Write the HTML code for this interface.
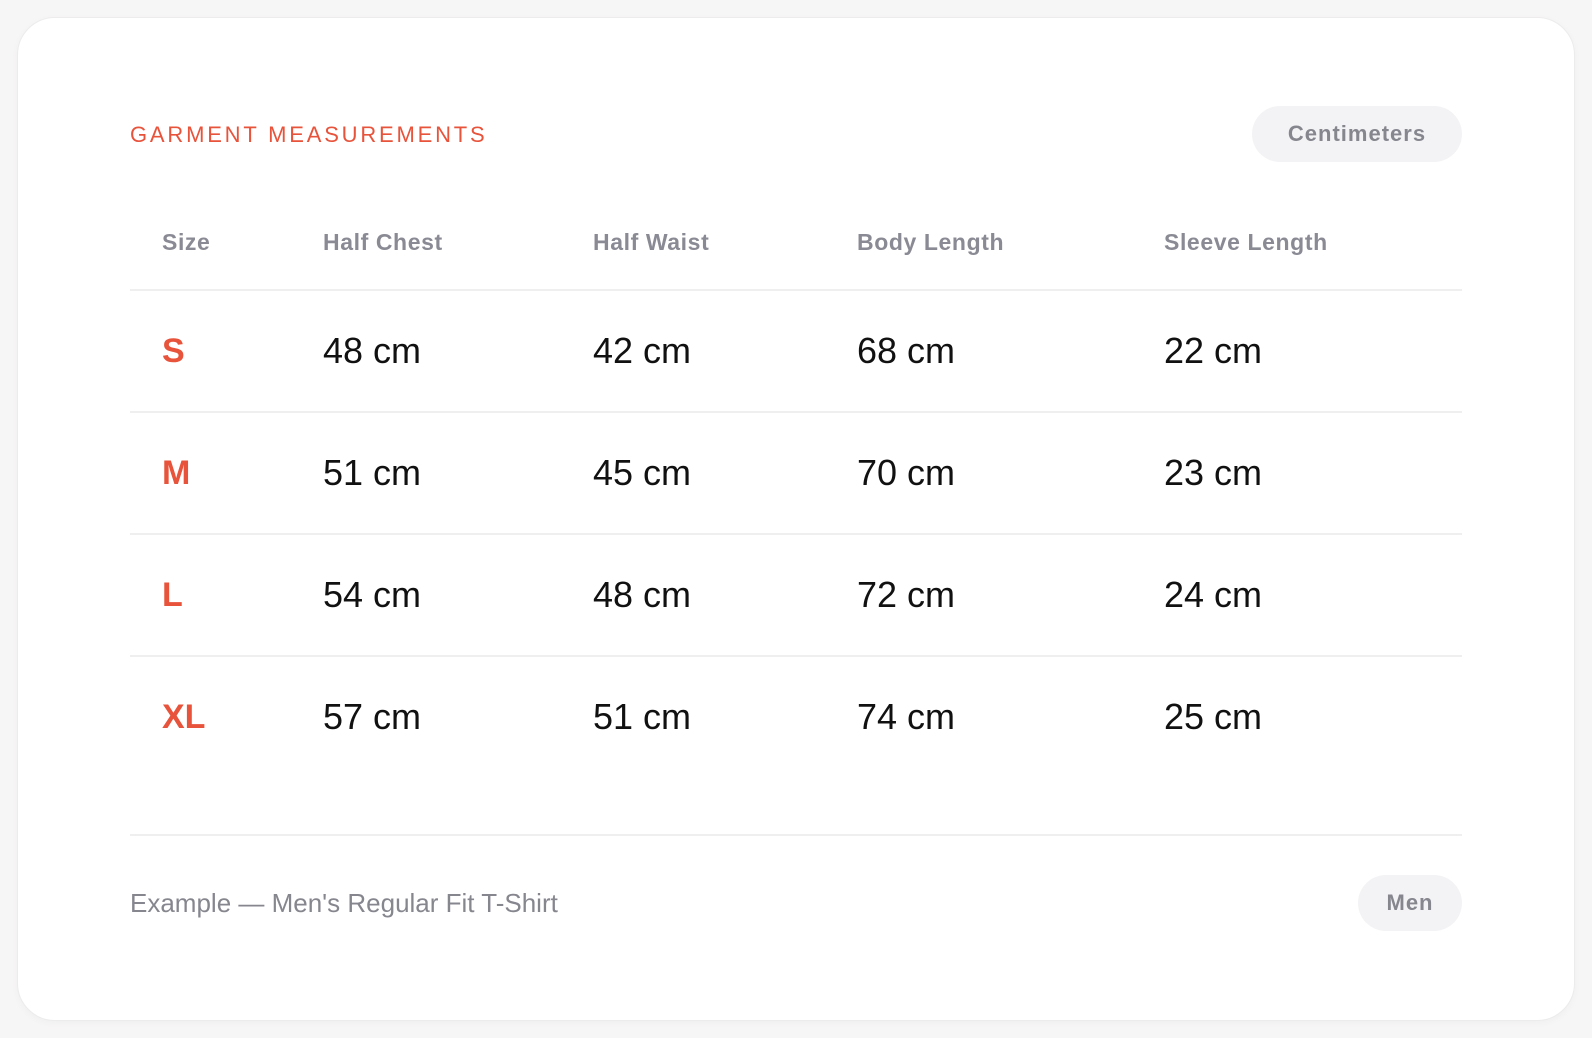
<!DOCTYPE html>
<html><head><style>
*{margin:0;padding:0;box-sizing:border-box}
body{width:1592px;height:1038px;background:#f7f6f6;font-family:"Liberation Sans",sans-serif;position:relative;overflow:hidden}
.card{position:absolute;left:17px;top:17px;width:1558px;height:1004px;background:#fff;border-radius:38px;border:1px solid #ececec;box-shadow:0 2px 8px rgba(0,0,0,0.03)}
.t{position:absolute;white-space:nowrap}
.title{left:130px;top:122px;font-size:22px;letter-spacing:2.8px;color:#e8533b}
.pill{position:absolute;background:#f3f3f5;border-radius:28px;color:#86868f;font-size:22px;font-weight:bold;display:flex;align-items:center;justify-content:center;letter-spacing:1px}
.h{font-size:23px;color:#8a8a94;top:229px;font-weight:bold;letter-spacing:0.6px}
.line{position:absolute;left:130px;width:1332px;height:2px;background:#efefef}
.v{font-size:36px;color:#111;}
.s{font-size:34px;color:#e8533b;font-weight:bold}
</style></head><body>
<div class="card"></div>
<div class="t title">GARMENT MEASUREMENTS</div>
<div class="pill" style="left:1252px;top:106px;width:210px;height:56px">Centimeters</div>
<div class="t h" style="left:162px">Size</div>
<div class="t h" style="left:323px">Half Chest</div>
<div class="t h" style="left:593px">Half Waist</div>
<div class="t h" style="left:857px">Body Length</div>
<div class="t h" style="left:1164px">Sleeve Length</div>
<div class="line" style="top:289px"></div>
<div class="line" style="top:411px"></div>
<div class="line" style="top:533px"></div>
<div class="line" style="top:655px"></div>
<div class="line" style="top:834px"></div>

<div class="t s" style="left:162px;top:332px">S</div>
<div class="t v" style="left:323px;top:330px">48 cm</div>
<div class="t v" style="left:593px;top:330px">42 cm</div>
<div class="t v" style="left:857px;top:330px">68 cm</div>
<div class="t v" style="left:1164px;top:330px">22 cm</div>

<div class="t s" style="left:162px;top:454px">M</div>
<div class="t v" style="left:323px;top:452px">51 cm</div>
<div class="t v" style="left:593px;top:452px">45 cm</div>
<div class="t v" style="left:857px;top:452px">70 cm</div>
<div class="t v" style="left:1164px;top:452px">23 cm</div>

<div class="t s" style="left:162px;top:576px">L</div>
<div class="t v" style="left:323px;top:574px">54 cm</div>
<div class="t v" style="left:593px;top:574px">48 cm</div>
<div class="t v" style="left:857px;top:574px">72 cm</div>
<div class="t v" style="left:1164px;top:574px">24 cm</div>

<div class="t s" style="left:162px;top:698px">XL</div>
<div class="t v" style="left:323px;top:696px">57 cm</div>
<div class="t v" style="left:593px;top:696px">51 cm</div>
<div class="t v" style="left:857px;top:696px">74 cm</div>
<div class="t v" style="left:1164px;top:696px">25 cm</div>

<div class="t" style="left:130px;top:888px;font-size:26px;color:#86868f">Example — Men's Regular Fit T-Shirt</div>
<div class="pill" style="left:1358px;top:875px;width:104px;height:56px">Men</div>
</body></html>
